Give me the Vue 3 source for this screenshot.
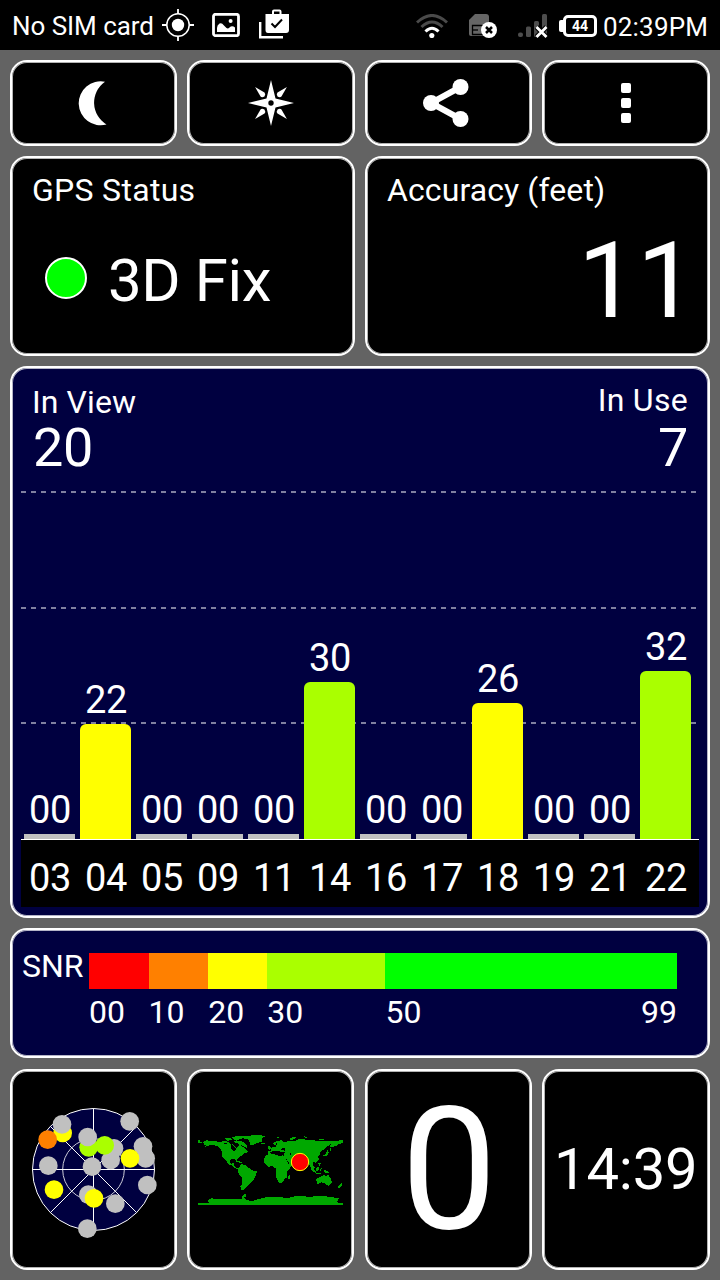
<template>
  <div class="screen">
    <!-- System status bar -->
    <header class="status-bar">
      <div class="sb-left">
        <span class="sb-text">No SIM card</span>
        <svg class="ic-target" viewBox="0 0 32 32" width="32" height="32">
          <circle cx="16" cy="16" r="11.2" fill="none" stroke="#fff" stroke-width="1.5" />
          <circle cx="16" cy="16" r="6.2" fill="#fff" />
          <path d="M16 0v5M16 27v5M0 16h5M27 16h5" stroke="#fff" stroke-width="1.8" />
        </svg>
        <svg class="ic-photo" viewBox="0 0 28 24" width="28" height="24">
          <rect x="1.5" y="1.3" width="25" height="21.4" rx="2" fill="none" stroke="#fff" stroke-width="2.8" />
          <path d="M5 15 Q5 12 7.500 10.500 Q10 9.500 11.500 12 L14.500 15 Q16 16 17.500 14.500 Q20 12 23 14.500 V19 H5z" fill="#fff" />
          <circle cx="18.600" cy="8" r="2" fill="#fff" />
        </svg>
        <svg class="ic-bag" viewBox="0 0 30 30" width="30" height="30">
          <path d="M6.500 5H13V2.500Q13 .5 15 .5H20.500Q22.500 .5 22.500 2.500V5H30V21Q30 24 27 24H9Q6.500 24 6.500 21z" fill="#fff" />
          <path d="M15 5V2.500H20.500V5z" fill="#000" />
          <path d="M12.500 14.500L16 18L23 10.500" fill="none" stroke="#000" stroke-width="2" />
          <path d="M1.200 13V28.300H24" fill="none" stroke="#fff" stroke-width="2.400" />
        </svg>
      </div>
      <div class="sb-right">
        <svg class="ic-wifi" viewBox="0 0 32 24" width="32" height="24" fill="none" stroke-width="3">
          <path d="M1 8.500Q16 -5.500 31 8.500" stroke="#4a4a4a" />
          <path d="M5.500 13Q16 3 26.500 13" stroke="#4a4a4a" />
          <path d="M9.500 17.500Q16 11 22.500 17.500" stroke="#fff" />
          <circle cx="15.800" cy="21.500" r="2.600" fill="#fff" />
        </svg>
        <svg class="ic-sim" viewBox="0 0 28 24" width="28" height="24">
          <path d="M6 0H17Q20 0 20 3V22H2Q0 22 0 20V6z" fill="#666" />
          <path d="M3.500 11.500H14V20.500H3.500z" fill="#666" stroke="#000" stroke-width="1.300" />
          <path d="M3.500 16H9" stroke="#000" stroke-width="1.300" />
          <circle cx="20" cy="16" r="8" fill="#fff" />
          <path d="M17 13l6 6M23 13l-6 6" stroke="#000" stroke-width="2.500" />
        </svg>
        <svg class="ic-signal" viewBox="0 0 30 24" width="30" height="24">
          <rect x="0" y="18.500" width="5" height="4.500" rx="2" fill="#4d4d4d" />
          <rect x="8" y="12.500" width="5" height="10.500" rx="1.500" fill="#4d4d4d" />
          <rect x="16" y="7" width="5" height="16" rx="1.500" fill="#4d4d4d" />
          <rect x="24" y="0" width="5" height="23" rx="1.500" fill="#4d4d4d" />
          <path d="M18.500 13l10 10M28.500 13l-10 10" stroke="#000" stroke-width="5" />
          <path d="M18.500 13l10 10M28.500 13l-10 10" stroke="#fff" stroke-width="2.800" />
        </svg>
        <div class="battery"><span>44</span></div>
        <span class="sb-text sb-time">02:39PM</span>
      </div>
    </header>

    <main class="board">
      <!-- Toolbar -->
      <button class="tile tool moon">
        <svg viewBox="0 0 30 46" width="30" height="46">
          <path d="M28 1.700A22 22 0 1 0 29.500 44.500A25.500 25.500 0 0 1 28 1.700z" fill="#fff" />
        </svg>
      </button>
      <button class="tile tool">
        <svg viewBox="-23 -23 46 46" width="46" height="46" fill="#fff">
          <path d="M0 -23L4.500 -4.500L23 0L4.500 4.500L0 23L-4.500 4.500L-23 0L-4.500 -4.500z" />
          <path v-for="a in [45, 135, 225, 315]" :key="a" :transform="`rotate(${a})`" d="M0 -22.500L2.800 -12Q2.800 -9.800 0 -9.300Q-2.800 -9.800 -2.800 -12z" />
          <circle r="2.700" fill="#000" />
        </svg>
      </button>
      <button class="tile tool share">
        <svg viewBox="0 0 46 48" width="46" height="48">
          <path d="M37.500 8L8 24L37.500 40" fill="none" stroke="#fff" stroke-width="6" />
          <circle cx="37.500" cy="8" r="8" fill="#fff" />
          <circle cx="8" cy="24" r="8" fill="#fff" />
          <circle cx="37.500" cy="40" r="8" fill="#fff" />
        </svg>
      </button>
      <button class="tile tool">
        <span class="more"><i></i><i></i><i></i></span>
      </button>

      <!-- Fix + accuracy -->
      <section class="tile wide info">
        <div class="label">GPS Status</div>
        <div class="fix-row">
          <span class="fix-dot"></span>
          <span class="fix-text">3D Fix</span>
        </div>
      </section>
      <section class="tile wide info">
        <div class="label tight">Accuracy (feet)</div>
        <div class="accuracy">11</div>
      </section>

      <!-- Satellite signal chart -->
      <section class="tile full chart">
        <div class="chart-head">
          <div>
            <div class="label tight">In View</div>
            <div class="count">20</div>
          </div>
          <div class="in-use">
            <div class="label">In Use</div>
            <div class="count">7</div>
          </div>
        </div>
        <div class="plot">
          <div v-for="g in gridLines" :key="g" class="grid-line" :style="{ bottom: g + 'px' }"></div>
          <div v-for="s in sats" :key="s.id" class="col">
            <span class="num">{{ pad(s.snr) }}</span>
            <div class="bar" :class="level(s.snr)" :style="{ height: barHeight(s.snr) + 'px' }"></div>
          </div>
        </div>
        <div class="axis">
          <span v-for="s in sats" :key="s.id" class="num">{{ pad(s.id) }}</span>
        </div>
      </section>

      <!-- SNR legend -->
      <section class="tile full legend">
        <div class="label snr">SNR</div>
        <div class="scale">
          <div v-for="r in ranges" :key="r.from" class="range" :style="{ flexGrow: r.size }">
            <div class="swatch" :class="level(r.from)"></div>
            <div class="ticks">
              <span>{{ pad(r.from) }}</span>
              <span v-if="r.to">{{ r.to }}</span>
            </div>
          </div>
        </div>
      </section>

      <!-- Bottom tiles -->
      <section class="tile bottom sky">
        <svg viewBox="60 42 390 414" width="130" height="138">
          <circle cx="250.500" cy="238.500" r="183" fill="#000040" stroke="#fff" stroke-width="3" />
          <circle cx="250.500" cy="238.500" r="92.500" fill="none" stroke="#ccccd8" stroke-width="3" />
          <path d="M67 238.500H434M250.500 55V422M121 109L380 368M121 368L380 109" stroke="#fff" stroke-width="3" />
          <circle v-for="(d, i) in skyDots" :key="i" :cx="d[0]" :cy="d[1]" r="28" :class="'d-' + d[2]" />
        </svg>
      </section>
      <section class="tile bottom map">
        <svg viewBox="21 42 444 216" width="148" height="72">
          <path v-for="(p, i) in land" :key="i" :d="p" fill="#00a800" shape-rendering="crispEdges" />
          <path d="M238 96L258 92L284 97L282 107L262 104L244 101zM276 84l10 2 -2 6 -10 -2zM300 94l4 12 -5 -4zM287 113l12 20 -2 2zM122 72l8 4 10 12 -6 6 -10 -6zM102 69l8 0 2 4 -8 0zM262 66l-8 12 4 2z" fill="#000" shape-rendering="crispEdges" />
          <circle cx="330" cy="126" r="26" fill="#f00" stroke="#ff0" stroke-width="3" />
        </svg>
      </section>
      <section class="tile bottom speed"><span>0</span></section>
      <section class="tile bottom clock"><span>14:39</span></section>
    </main>
  </div>
</template>

<script setup>
const PX_PER_DB = 5.25

const sats = [
  { id: 3, snr: 0 },
  { id: 4, snr: 22 },
  { id: 5, snr: 0 },
  { id: 9, snr: 0 },
  { id: 11, snr: 0 },
  { id: 14, snr: 30 },
  { id: 16, snr: 0 },
  { id: 17, snr: 0 },
  { id: 18, snr: 26 },
  { id: 19, snr: 0 },
  { id: 21, snr: 0 },
  { id: 22, snr: 32 },
]

// distance of each dashed line from the axis
const gridLines = [115, 230, 346]

const ranges = [
  { from: 0, size: 59.5 },
  { from: 10, size: 59.5 },
  { from: 20, size: 59 },
  { from: 30, size: 118 },
  { from: 50, to: 99, size: 291 },
]

// x, y, colour; later dots lie on top
const skyDots = [
  [158, 129, 'yellow'], [156, 103, 'grey'], [113, 149, 'orange'],
  [359, 94, 'grey'], [312, 175, 'grey'], [302, 210, 'grey'],
  [236, 172, 'lime'], [233, 141, 'grey'], [284, 166, 'lime'],
  [399, 169, 'grey'], [407, 205, 'grey'], [360, 205, 'yellow'],
  [115, 227, 'grey'], [246, 230, 'grey'], [132, 299, 'yellow'],
  [412, 285, 'grey'], [235, 314, 'grey'], [252, 325, 'yellow'],
  [316, 341, 'grey'], [232, 416, 'grey'],
]

const land = [
  // North and Central America
  'M24 61l6 0 0 4 6 1 0 3 -12 -1zM40 66L48 61L84 65L110 64L120 70L130 74L138 83L144 82L148 72L160 82L172 91L174 96L160 102L154 108L147 111L141 117L140 126L133 116L121 119L118 127L124 132L130 128L134 132L130 136L139 143L150 146L146 149L134 144L126 137L115 133L106 119L97 109L94 90L84 78L68 75L54 77L44 82L50 76L42 73z',
  // Arctic islands and Greenland
  'M104 56l16 -3 6 6 -12 4zM124 52l22 -5 24 0 -8 7 -14 4 -8 5 -10 -5zM128 65l18 -2 14 2 12 12 -2 6 -16 -8 -10 -4zM151 52L176 47L210 45L225 49L216 55L217 64L204 68L194 72L186 77L179 72L178 59L162 56zM213 68l12 0 -2 5 -8 -1z',
  // Caribbean and South America
  'M136 121l12 3 10 5 -8 1zM149 139L154 132L168 136L178 145L185 151L201 154L196 169L190 182L180 189L172 199L166 203L162 211L154 210L151 199L156 192L157 174L147 162L143 153zM158 225l12 -4 -2 10 -12 3z',
  // Africa and Madagascar
  'M229 105L246 101L258 105L270 108L287 109L294 124L298 133L307 133L300 145L291 156L292 171L283 178L278 187L267 189L260 176L257 160L257 145L248 139L233 140L222 129L222 116zM297 165l5 2 -4 12 -5 -2z',
  // Eurasia
  'M233 94L244 93L244 85L252 79L259 82L258 73L253 76L249 70L260 63L274 61L282 66L298 63L314 64L326 57L342 58L356 61L372 61L390 64L412 63L434 62L459 61L459 69L445 72L438 78L426 81L418 79L426 71L409 80L404 88L392 94L388 105L382 110L388 119L378 128L370 127L369 134L374 143L371 151L363 146L358 133L350 126L340 145L334 141L328 128L319 127L309 137L299 142L289 122L285 112L270 103L258 100L246 100L236 104zM237 74l7 12 -6 4 -5 -8z',
  // Far north islands and Japan
  'M256 50l14 1 -5 4zM300 54l20 -4 -8 8 -10 2zM342 49l12 2 -6 4zM385 56l18 2 -12 3zM398 107l6 -2 6 -9 4 -8 2 11 -5 7 -10 4zM420 84l4 4 -4 7z',
  // South East Asia and Oceania
  'M360 137l10 10 10 10 -4 2 -11 -8zM374 157l20 3 -2 3 -18 -3zM377 145l11 -6 0 10 -7 7zM389 147l6 -2 -2 10 -4 -2zM386 126l6 4 -3 8 -4 -6zM399 149l10 3 12 8 -14 0zM378 177L394 169L404 164L408 170L414 164L424 177L425 190L415 197L404 190L394 187L382 192zM455 190l1 6 -9 8 -4 -2z',
  // Antarctica
  'M24 249L58 249L52 242L64 235L88 238L120 236L156 238L160 231L167 239L184 244L198 239L226 232L262 231L294 234L314 229L336 227L356 231L390 227L422 231L448 235L438 247L459 249L459 255L24 255z',
]

const pad = (n) => String(n).padStart(2, '0')

const barHeight = (snr) => (snr ? Math.floor(snr * PX_PER_DB) : 5)

function level(snr) {
  if (snr >= 50) return 'l-green'
  if (snr >= 30) return 'l-lime'
  if (snr >= 20) return 'l-yellow'
  if (snr >= 10) return 'l-orange'
  return 'l-none'
}
</script>

<style>
body { margin: 0; background: #636363; }
</style>

<style scoped>
.screen {
  width: 720px;
  height: 1280px;
  overflow: hidden;
  background: #636363;
  color: #fff;
  font-family: Roboto, "Liberation Sans", sans-serif;
}

/* Status bar */
.status-bar {
  height: 50px;
  box-sizing: border-box;
  padding: 2px 11px 0 12px;
  background: #000;
  display: flex;
  align-items: center;
  justify-content: space-between;
}
.sb-left, .sb-right { display: flex; align-items: center; height: 48px; }
.sb-text { font-size: 26px; line-height: 48px; white-space: nowrap; }
.sb-left .sb-text { width: 150px; letter-spacing: -0.05px; }
.ic-target { margin-bottom: 2px; }
.ic-photo { margin: 0 0 2px 18px; }
.ic-bag { margin: 0 0 4px 19px; }
.ic-sim { margin-left: 21px; }
.ic-signal { margin-left: 21px; }
.battery {
  position: relative;
  width: 34px;
  height: 22px;
  box-sizing: border-box;
  margin: 0 6px 0 15px;
  border: 3px solid #fff;
  border-radius: 5px;
  font-size: 14px;
  font-weight: 700;
  line-height: 16px;
  text-align: center;
}
.battery::before {
  content: '';
  position: absolute;
  left: -7px;
  top: 2px;
  width: 4px;
  height: 12px;
  border-radius: 2px 0 0 2px;
  background: #fff;
}
.sb-time { width: 106px; letter-spacing: 0.2px; padding-top: 2px; }

/* Tiles */
.board {
  display: grid;
  grid-template-columns: 167px 168px 167px 168px;
  grid-template-rows: 86px 200px 552px 130px 202px;
  gap: 10px;
  padding: 10px;
}
.tile {
  box-sizing: border-box;
  border: 2px solid #fff;
  border-radius: 17px;
  background: #000;
  box-shadow: inset 0 0 0 1px rgba(255,255,255,0.7);
  overflow: hidden;
}
.wide { grid-column: span 2; }
.full { grid-column: span 4; background: #000040; }
.label { font-size: 32px; line-height: 40px; letter-spacing: 0.3px; white-space: nowrap; }
.label.tight { letter-spacing: 0.1px; }

.tool { display: flex; align-items: center; justify-content: center; padding: 0; }
.moon { padding-right: 3px; }
.share { padding-right: 5px; }
.more { display: flex; flex-direction: column; gap: 5px; }
.more i { width: 10px; height: 10px; border-radius: 2px; background: #fff; }

.info { padding: 12px 20px 0; }
.fix-row { display: flex; align-items: center; height: 60px; margin-top: 40px; padding-left: 13px; }
.fix-dot {
  width: 42px;
  height: 42px;
  box-sizing: border-box;
  margin: 0 21px 5px 0;
  border: 2px solid #fff;
  border-radius: 50%;
  background: #0f0;
}
.fix-text { font-size: 60px; line-height: 60px; letter-spacing: -0.4px; padding-top: 2px; }
.accuracy { font-size: 105px; line-height: 106px; margin: 19px -8px 0 0; text-align: right; }

/* Chart */
.chart { padding: 12px 9px 0; }
.chart-head { display: flex; justify-content: space-between; height: 94px; padding: 2px 11px 0; box-sizing: border-box; }
.count { font-size: 54px; line-height: 52px; padding-left: 1px; letter-spacing: -0.3px; }
.in-use { text-align: right; margin-top: -2px; }
.in-use .count { margin-top: 2px; }
.plot {
  position: relative;
  display: flex;
  align-items: flex-end;
  gap: 5px;
  height: 365px;
  padding-left: 3px;
}
.grid-line {
  position: absolute;
  left: 0;
  right: 0;
  height: 2px;
  background: repeating-linear-gradient(90deg, #8080a0 0 5px, transparent 5px 10px);
}
.col { position: relative; width: 51px; display: flex; flex-direction: column; }
.num { width: 52px; font-size: 38px; line-height: 40px; letter-spacing: -0.4px; text-align: center; }
.col .num { margin-bottom: 4px; }
.bar { border-radius: 6px 6px 0 0; }
.axis {
  display: flex;
  gap: 4px;
  width: 678px;
  height: 68px;
  box-sizing: border-box;
  padding: 18px 0 0 3px;
  border-top: 1px solid #fff;
  background: #000;
}
.bar.l-none { background: #c0c0c0; border-radius: 0; }
.swatch.l-none { background: #f00; }
.l-orange { background: #ff8000; }
.l-yellow { background: #ff0; }
.l-lime { background: #af0; }
.l-green { background: #0f0; }

/* Legend */
.legend { display: flex; padding: 16px 31px 0 10px; }
.snr { width: 67px; letter-spacing: 0; }
.scale { display: flex; width: 588px; padding-top: 7px; }
.range { flex: 1 1 0; min-width: 0; }
.swatch { height: 36px; }
.ticks { display: flex; justify-content: space-between; margin-top: 3px; font-size: 32px; line-height: 40px; }

/* Bottom row */
.bottom { margin-top: 1px; display: flex; }
.sky { padding: 33px 0 0 18px; }
.map { padding: 63px 0 0 8px; margin-right: 1px; }
.d-grey { fill: #c0c0c0; }
.d-yellow { fill: #ff0; }
.d-lime { fill: #af0; }
.d-orange { fill: #ff8000; }
.speed { justify-content: center; }
.speed span { font-size: 171px; line-height: 197px; padding-left: 1px; }
.clock { padding: 0 0 0 10px; }
.clock span { font-size: 58px; line-height: 197px; letter-spacing: -0.2px; white-space: nowrap; }
</style>
